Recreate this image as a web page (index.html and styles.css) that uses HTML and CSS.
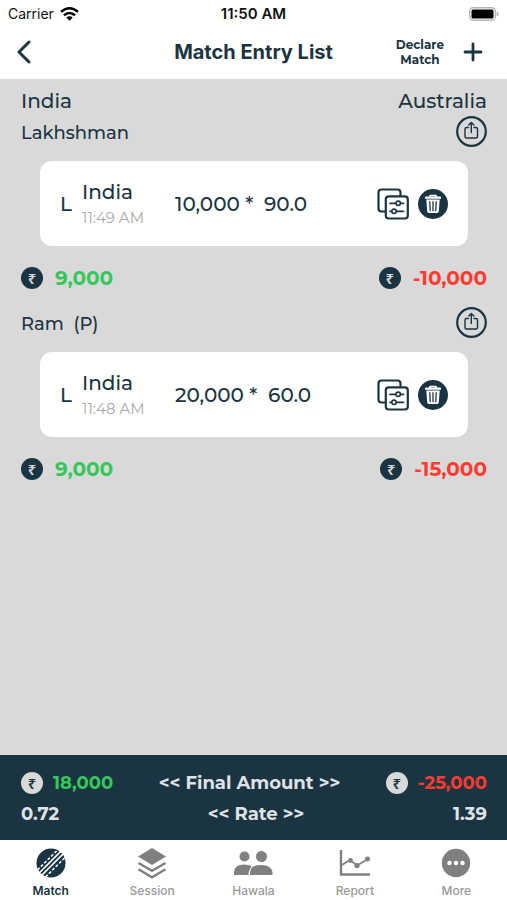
FILE: index.html
```html
<!DOCTYPE html>
<html lang="en">
<head>
<meta charset="utf-8">
<meta name="viewport" content="width=device-width, initial-scale=1">
<title>Match Entry List</title>
<link rel="stylesheet" href="styles.css">
</head>
<body>
<svg class="sprite" aria-hidden="true">
  <symbol id="share" viewBox="0 0 31 31">
    <g fill="none" stroke="currentColor" stroke-linecap="round" stroke-linejoin="round">
      <circle cx="15.500" cy="15.500" r="14.300" stroke-width="2.200"/>
      <path d="M12.500 11.500H10.500Q9 11.500 9 13V20.500Q9 22 10.500 22H20Q21.500 22 21.500 20.500V13Q21.500 11.500 20 11.500H18M15.300 16.500V6.500M12.700 9L15.300 6.500L17.900 9" stroke-width="1.400"/>
    </g>
  </symbol>
  <symbol id="edit" viewBox="0 0 32 32">
    <g fill="none" stroke="currentColor" stroke-width="2.200" stroke-linecap="round">
      <path d="M8.500 23.500H4.500Q1.500 23.500 1.500 20.500V4.500Q1.500 1.500 4.500 1.500H20.500Q23.500 1.500 23.500 4.500V7.500"/>
      <rect x="8.800" y="8.300" width="22" height="22.200" rx="3"/>
      <path d="M13 15.300H18.300M24 15.300H26.500M13 23.300H14M20 23.300H26.500" stroke-width="1.700"/>
      <circle cx="21.200" cy="15.300" r="2.200" stroke-width="1.600"/>
      <circle cx="17" cy="23.300" r="2.200" stroke-width="1.600"/>
    </g>
  </symbol>
  <symbol id="trash" viewBox="0 0 30 30">
    <circle cx="15" cy="15" r="15" fill="currentColor"/>
    <path d="M12 8V6.500H18V8" fill="none" stroke="#fff" stroke-width="1.700" stroke-linejoin="round"/>
    <path d="M8 7.500H22Q23 7.500 23 8.500V9.700H7V8.500Q7 7.500 8 7.500ZM8.300 10.500H21.700L20.800 22.300Q20.700 24 19 24H11Q9.300 24 9.200 22.300Z" fill="#fff"/>
    <path d="M11.800 12.700L12.200 21.700M15 12.700V21.700M18.200 12.700L17.800 21.700" stroke="currentColor" stroke-width="1.300" stroke-linecap="round"/>
  </symbol>
</svg>

<div class="app">
  <div class="status">
    <div class="carrier">
      <span>Carrier</span>
      <svg width="19" height="14" viewBox="0 0 19 14" aria-hidden="true">
        <g fill="none" stroke="#000" stroke-width="2.500">
          <path d="M1 4.900Q9.500 -2.300 18 4.900"/>
          <path d="M4 8.300Q9.500 3.600 15 8.300"/>
        </g>
        <path d="M6.300 10.400Q9.500 7.900 12.700 10.400L9.500 13.700Z"/>
      </svg>
    </div>
    <span class="clock">11:50 AM</span>
    <svg class="battery" width="30" height="14" viewBox="0 0 30 14" aria-hidden="true">
      <rect x="0.700" y="0.700" width="25.600" height="12.600" rx="3.500" fill="#fff" stroke="#b5b5b5" stroke-width="1.400"/>
      <rect x="2.500" y="2.500" width="22" height="9" rx="1.500"/>
      <path d="M27.600 4.500Q29.700 5.300 29.700 7T27.600 9.500Z" fill="#b5b5b5"/>
    </svg>
  </div>

  <header class="nav">
    <button class="back" type="button" aria-label="Back">
      <svg width="16" height="24" viewBox="0 0 16 24" aria-hidden="true"><path d="M13 2L3 12L13 22" fill="none" stroke="currentColor" stroke-width="3" stroke-linecap="round" stroke-linejoin="round"/></svg>
    </button>
    <h1>Match Entry List</h1>
    <div class="nav-actions">
      <button class="declare" type="button">Declare<br>Match</button>
      <button type="button" aria-label="Add entry">
        <svg width="20" height="20" viewBox="0 0 20 20" aria-hidden="true"><path d="M10 2V18M2 10H18" stroke="currentColor" stroke-width="2.800" stroke-linecap="round"/></svg>
      </button>
    </div>
  </header>

  <main>
    <div class="teams"><span>India</span><span>Australia</span></div>

    <section class="entry">
      <div class="entry-head">
        <h2>Lakhshman</h2>
        <button type="button" aria-label="Share Lakhshman"><svg width="31" height="31"><use href="#share"/></svg></button>
      </div>
      <div class="card">
        <span class="side">L</span>
        <div class="pick"><span>India</span><time>11:49 AM</time></div>
        <span class="stake">10,000 *&nbsp; 90.0</span>
        <div class="actions">
          <button type="button" aria-label="Edit"><svg width="32" height="32"><use href="#edit"/></svg></button>
          <button type="button" aria-label="Delete"><svg width="30" height="30"><use href="#trash"/></svg></button>
        </div>
      </div>
      <div class="totals">
        <span class="amount gain"><span class="coin">₹</span>9,000</span>
        <span class="amount loss"><span class="coin">₹</span>-10,000</span>
      </div>
    </section>

    <section class="entry">
      <div class="entry-head">
        <h2>Ram&nbsp; (P)</h2>
        <button type="button" aria-label="Share Ram"><svg width="31" height="31"><use href="#share"/></svg></button>
      </div>
      <div class="card">
        <span class="side">L</span>
        <div class="pick"><span>India</span><time>11:48 AM</time></div>
        <span class="stake">20,000 *&nbsp; 60.0</span>
        <div class="actions">
          <button type="button" aria-label="Edit"><svg width="32" height="32"><use href="#edit"/></svg></button>
          <button type="button" aria-label="Delete"><svg width="30" height="30"><use href="#trash"/></svg></button>
        </div>
      </div>
      <div class="totals">
        <span class="amount gain"><span class="coin">₹</span>9,000</span>
        <span class="amount loss"><span class="coin">₹</span>-15,000</span>
      </div>
    </section>
  </main>

  <section class="summary">
    <div class="summary-row">
      <span class="amount gain"><span class="coin">₹</span>18,000</span>
      <span>&lt;&lt; Final Amount &gt;&gt;</span>
      <span class="amount loss"><span class="coin">₹</span>-25,000</span>
    </div>
    <div class="summary-row">
      <span>0.72</span>
      <span>&lt;&lt; Rate &gt;&gt;</span>
      <span>1.39</span>
    </div>
  </section>

  <nav class="tabs">
    <a class="active" href="#match">
      <svg width="32" height="32" viewBox="0 0 32 32" aria-hidden="true">
        <circle cx="16" cy="16" r="14.500" fill="currentColor"/>
        <g fill="none" stroke="#fff" stroke-width="1.700">
          <path d="M3.700 26.500L26.500 3.700M6.500 28.500L28.500 6.500"/>
          <path d="M2.500 23L23 2.500M10.500 30L30 10.500" stroke-width="1.500" stroke-dasharray="3 1.800"/>
        </g>
      </svg>
      Match
    </a>
    <a href="#session">
      <svg width="32" height="32" viewBox="0 0 32 32" aria-hidden="true">
        <path d="M16 1L30 9.500L16 18L2 9.500Z" fill="currentColor"/>
        <path d="M2.500 16L16 23.800L29.500 16M2.500 22.300L16 30.300L29.500 22.300" fill="none" stroke="currentColor" stroke-width="2.300"/>
      </svg>
      <span>Session</span>
    </a>
    <a href="#hawala">
      <svg width="40" height="32" viewBox="0 0 40 32" aria-hidden="true">
        <g fill="currentColor">
          <circle cx="11.500" cy="9.500" r="5"/><circle cx="28.500" cy="9.500" r="5.500"/>
          <path d="M1 28V25.500Q1 17.500 11 17.500Q16 17.500 19 19.500Q15.500 22.500 15.500 28Z"/>
          <path d="M17 28V26Q17 18 28 18T39.500 26V28Z"/>
        </g>
      </svg>
      <span>Hawala</span>
    </a>
    <a href="#report">
      <svg width="32" height="32" viewBox="0 0 32 32" aria-hidden="true">
        <path d="M2 3V27.500H31" fill="none" stroke="currentColor" stroke-width="2.400"/>
        <path d="M2 18.500L11 13L18 18.500L29 12" fill="none" stroke="currentColor" stroke-width="1.800"/>
        <g fill="currentColor"><circle cx="11.500" cy="13.500" r="2.400"/><circle cx="18" cy="18.500" r="2.600"/><circle cx="28.500" cy="12" r="2.500"/></g>
      </svg>
      <span>Report</span>
    </a>
    <a href="#more">
      <svg width="32" height="32" viewBox="0 0 32 32" aria-hidden="true">
        <circle cx="16" cy="16" r="14.200" fill="currentColor"/>
        <g fill="#fff"><circle cx="9.500" cy="16" r="2.200"/><circle cx="16" cy="16" r="2.200"/><circle cx="22.500" cy="16" r="2.200"/></g>
      </svg>
      <span>More</span>
    </a>
  </nav>
</div>
</body>
</html>
```
FILE: styles.css
```css
:root {
  --ink: #1b3442;
  --gray: #d9d9d9;
  --green: #34c759;
  --red: #ff3b30;
}

* { box-sizing: border-box; }

body {
  margin: 0;
  background: #fff;
  color: var(--ink);
  font-family: Montserrat, Inter, "Liberation Sans", sans-serif;
  font-size: 18px;
  font-weight: 500;
  line-height: 24px;
}

button {
  display: flex;
  padding: 0;
  border: 0;
  background: none;
  color: inherit;
  font: inherit;
  cursor: pointer;
}

svg { display: block; }

h1, h2 { margin: 0; }

.sprite {
  position: absolute;
  width: 0;
  height: 0;
}

.app {
  display: flex;
  flex-direction: column;
  min-height: 100vh;
}

.status {
  display: grid;
  grid-template-columns: 1fr auto 1fr;
  align-items: center;
  height: 27px;
  padding: 0 8px;
  color: #111;
  font-family: Inter, sans-serif;
  font-size: 14px;
  font-weight: 400;
}

.carrier {
  display: flex;
  align-items: center;
  gap: 6px;
}

.clock {
  font-size: 15px;
  font-weight: 600;
}

.battery { justify-self: end; }

.nav {
  display: grid;
  grid-template-columns: 1fr auto 1fr;
  align-items: center;
  height: 52px;
  padding: 0 24px 2px;
}

.back { margin-left: -8px; }

.nav h1 {
  font-family: Inter, sans-serif;
  font-size: 20px;
  font-weight: 700;
}

.nav-actions {
  display: flex;
  align-items: center;
  justify-content: flex-end;
  gap: 19px;
}

.declare {
  font-size: 12px;
  font-weight: 700;
  line-height: 15px;
}

main {
  flex: 1;
  padding: 6px 20px 0 21px;
  background: var(--gray);
}

.teams,
.entry-head,
.totals {
  display: flex;
  align-items: center;
  justify-content: space-between;
}

.teams {
  height: 31px;
  font-size: 20px;
}

.entry { margin-bottom: 13px; }

.entry-head h2 {
  padding-top: 2px;
  font-size: 18px;
  font-weight: 500;
}

.card {
  display: grid;
  grid-template-columns: 22px 93px 1fr auto;
  align-items: center;
  height: 85px;
  margin: 14px 19px 16px;
  padding: 0 20px;
  border-radius: 12px;
  background: #fff;
  font-size: 20px;
}

.pick {
  display: flex;
  flex-direction: column;
  gap: 2px;
  padding-top: 2px;
}

.pick time {
  color: #aaa;
  font-size: 15px;
  font-weight: 400;
}

.actions {
  display: flex;
  align-items: center;
  gap: 9px;
}

.totals { height: 32px; }

.amount {
  display: flex;
  align-items: center;
  gap: 12px;
  font-size: 20px;
  font-weight: 700;
}

.gain { color: var(--green); }

.loss { color: var(--red); }

.coin {
  display: grid;
  place-items: center;
  width: 22px;
  height: 22px;
  border-radius: 50%;
  background: var(--ink);
  color: var(--gray);
  font-family: "Noto Sans", sans-serif;
  font-size: 15px;
  font-weight: 600;
  line-height: 22px;
}

.summary {
  padding: 12px 20px 11px 21px;
  background: var(--ink);
  color: #dfe2e6;
  font-weight: 700;
}

.summary-row {
  display: flex;
  align-items: center;
  justify-content: space-between;
  height: 31px;
}

.summary .amount {
  gap: 10px;
  font-size: 18px;
}

.summary .coin {
  background: var(--gray);
  color: var(--ink);
}

.tabs {
  display: grid;
  grid-template-columns: repeat(5, 1fr);
  height: 60px;
  padding-top: 7px;
}

.tabs a {
  display: flex;
  flex-direction: column;
  align-items: center;
  gap: 4px;
  color: #808080;
  font-family: Inter, sans-serif;
  font-size: 12px;
  line-height: 16px;
  text-decoration: none;
}

.tabs span { color: #999; }

.tabs .active {
  color: var(--ink);
  font-weight: 600;
}
```
